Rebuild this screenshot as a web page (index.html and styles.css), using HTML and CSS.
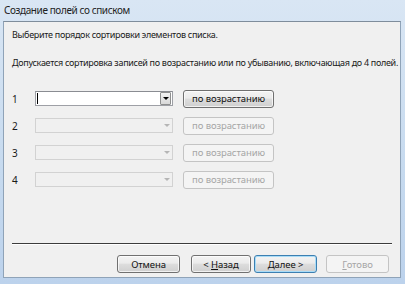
FILE: index.html
```html
<!DOCTYPE html>
<html>
<head>
<meta charset="utf-8">
<link rel="stylesheet" href="styles.css">
</head>
<body>
<div class="window">
  <div class="titlebar">Создание полей со списком</div>
  <div class="client">
    <p class="intro">Выберите порядок сортировки элементов списка.</p>
    <p class="note">Допускается сортировка записей по возрастанию или по убыванию, включающая до 4 полей.</p>
    <div class="rows">
      <div class="row">
        <span class="num">1</span>
        <div class="combo active"><span class="caret"></span><span class="drop"><span class="arrow"></span></span></div>
        <button class="btn">по возрастанию</button>
      </div>
      <div class="row">
        <span class="num">2</span>
        <div class="combo disabled"><span class="drop"><span class="arrow"></span></span></div>
        <button class="btn dis">по возрастанию</button>
      </div>
      <div class="row">
        <span class="num">3</span>
        <div class="combo disabled"><span class="drop"><span class="arrow"></span></span></div>
        <button class="btn dis">по возрастанию</button>
      </div>
      <div class="row">
        <span class="num">4</span>
        <div class="combo disabled"><span class="drop"><span class="arrow"></span></span></div>
        <button class="btn dis">по возрастанию</button>
      </div>
    </div>
    <div class="sep"></div>
    <div class="footer">
      <button class="btn wide">Отмена</button>
      <button class="btn back">&lt; <u>Н</u>азад</button>
      <button class="btn next"><u>Д</u>алее &gt;</button>
      <button class="btn dis last"><u>Г</u>отово</button>
    </div>
  </div>
  <div class="bottomframe"></div>
</div>
</body>
</html>
```

FILE: styles.css
```css
html, body {
  margin: 0;
  padding: 0;
}
body {
  width: 405px;
  height: 284px;
  overflow: hidden;
  font-family: "Noto Sans", "DejaVu Sans", sans-serif;
  font-size: 9px;
  letter-spacing: -0.3px;
  color: #1a1a1a;
}
.window {
  width: 405px;
  height: 284px;
  display: flex;
  flex-direction: column;
  background: linear-gradient(180deg, #d9e6f4 0%, #c6daef 60%, #bcd2ec 100%);
}
.titlebar {
  height: 21px;
  line-height: 21px;
  padding-left: 4px;
  font-size: 10px;
  letter-spacing: -0.4px;
  color: #1e1e1e;
  flex: none;
}
.client {
  flex: 1;
  margin: 0 4px 0 3px;
  background: #f0f0f0;
  border: 1px solid #8fa3b8;
  border-top-color: #7f8d9c;
  display: flex;
  flex-direction: column;
  padding: 0 0 0 8px;
  overflow: hidden;
}
.bottomframe {
  height: 6px;
  flex: none;
}
p {
  margin: 0;
  white-space: nowrap;
}
.intro {
  margin-top: 6px;
  line-height: 14px;
}
.note {
  margin-top: 14px;
  line-height: 14px;
}
.rows {
  margin-top: 21px;
  display: flex;
  flex-direction: column;
  gap: 12px;
}
.row {
  display: flex;
  align-items: center;
  height: 15px;
}
.num {
  width: 23px;
  flex: none;
  font-size: 10px;
}
.combo {
  width: 136px;
  height: 13px;
  border: 1px solid #abadb3;
  background: #fff;
  position: relative;
  flex: none;
}
.combo.active {
  border-color: #9ea0a6;
  border-top-color: #8a8c92;
}
.combo.disabled {
  background: #f0f0f0;
  border-color: #d2d2d2;
}
.caret {
  position: absolute;
  left: 1px;
  top: 1px;
  width: 1px;
  height: 11px;
  background: #000;
}
.drop {
  position: absolute;
  right: 1px;
  top: 1px;
  width: 9px;
  height: 11px;
  display: flex;
  align-items: center;
  justify-content: center;
}
.combo.active .drop {
  border: 1px solid #8e8f8f;
  top: 0;
  right: 1px;
  height: 11px;
  background: linear-gradient(180deg, #f2f2f2, #d8d8d8);
  border-radius: 1px;
}
.arrow {
  width: 0;
  height: 0;
  border-left: 3px solid transparent;
  border-right: 3px solid transparent;
  border-top: 3px solid #000;
}
.combo.disabled .arrow {
  border-top-color: #b5b5b5;
}
.btn {
  font-family: "Noto Sans", "DejaVu Sans", sans-serif;
  font-size: 9.5px;
  letter-spacing: -0.1px;
  color: #111;
  padding: 0;
  margin: 0 0 0 10px;
  width: 91px;
  height: 18px;
  border: 1px solid #707070;
  border-radius: 3px;
  background: linear-gradient(180deg, #f3f3f3 0%, #ebebeb 45%, #dddddd 50%, #cfcfcf 100%);
  box-shadow: inset 0 0 0 1px rgba(255,255,255,0.7);
  flex: none;
}
.btn.dis {
  color: #a6a6a6;
  background: #f4f4f4;
  border-color: #c4c4c4;
  box-shadow: none;
}
.btn u {
  text-decoration: underline;
}
.sep {
  margin-top: auto;
  margin-right: 8px;
  height: 1px;
  background: #3c3c3c;
  border-bottom: 1px solid #fff;
  margin-bottom: 10px;
}
.footer {
  display: flex;
  justify-content: flex-end;
  padding-right: 11px;
  margin-bottom: 4px;
}
.footer .btn {
  width: 63px;
  height: 18px;
  margin: 0;
}
.footer .back {
  margin-left: 11px;
  width: 60px;
}
.footer .next {
  margin-left: 3px;
  border-color: #3c7fb1;
  box-shadow: inset 0 0 0 1px #a9dcf7;
}
.footer .last {
  margin-left: 9px;
}
```
